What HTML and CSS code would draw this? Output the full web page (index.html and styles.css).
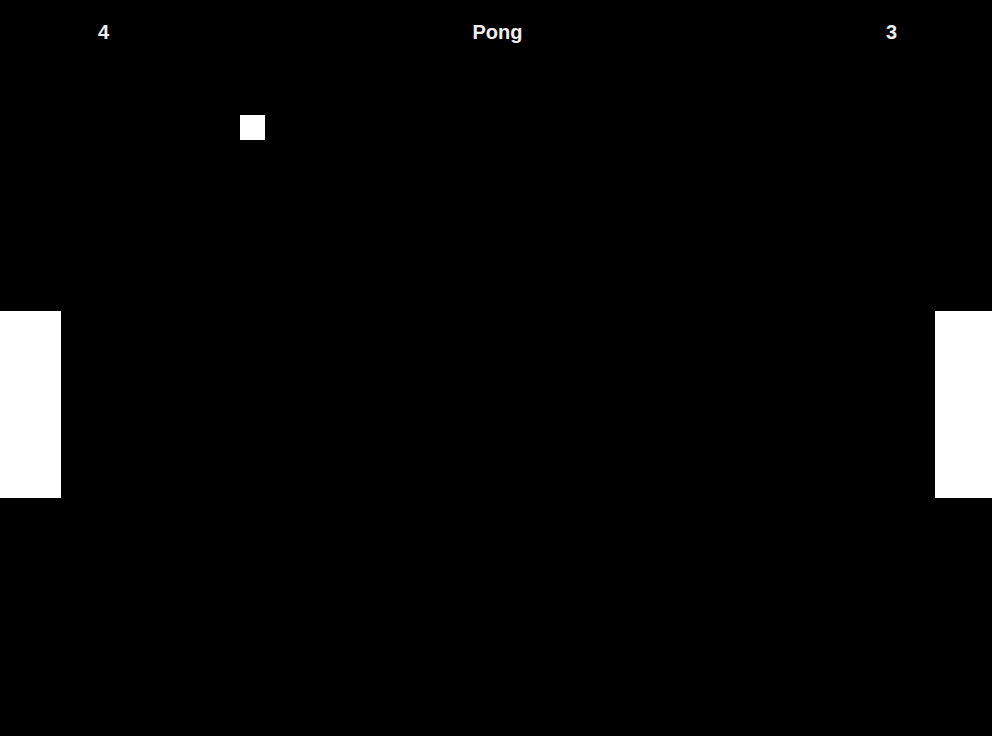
FILE: index.html
```html
<!DOCTYPE html>
<html>
<head>
<meta charset="utf-8">
<link rel="stylesheet" href="styles.css">
</head>
<body>
<div class="game">
  <header class="hud">
    <span class="score">4</span>
    <span class="title">Pong</span>
    <span class="score">3</span>
  </header>
  <div class="ball"></div>
  <div class="paddle paddle-left"></div>
  <div class="paddle paddle-right"></div>
</div>
</body>
</html>
```
FILE: styles.css
```css
html, body {
  margin: 0;
  padding: 0;
  background: #000;
}
.game {
  position: relative;
  width: 992px;
  height: 736px;
  overflow: hidden;
  background: #000;
  font-family: "Liberation Sans", Arial, sans-serif;
}
.hud {
  display: flex;
  justify-content: space-between;
  align-items: flex-start;
  padding: 21px 95px 0 98px;
  color: #eeeeee;
  font-weight: bold;
  font-size: 20px;
  line-height: 23px;
}
.ball {
  position: absolute;
  left: 239.5px;
  top: 114.5px;
  width: 25px;
  height: 25px;
  background: #fff;
}
.paddle {
  position: absolute;
  top: 310.5px;
  height: 187px;
  background: #fff;
}
.paddle-left {
  left: 0;
  width: 60.6px;
}
.paddle-right {
  right: 0;
  width: 56.7px;
}
```
